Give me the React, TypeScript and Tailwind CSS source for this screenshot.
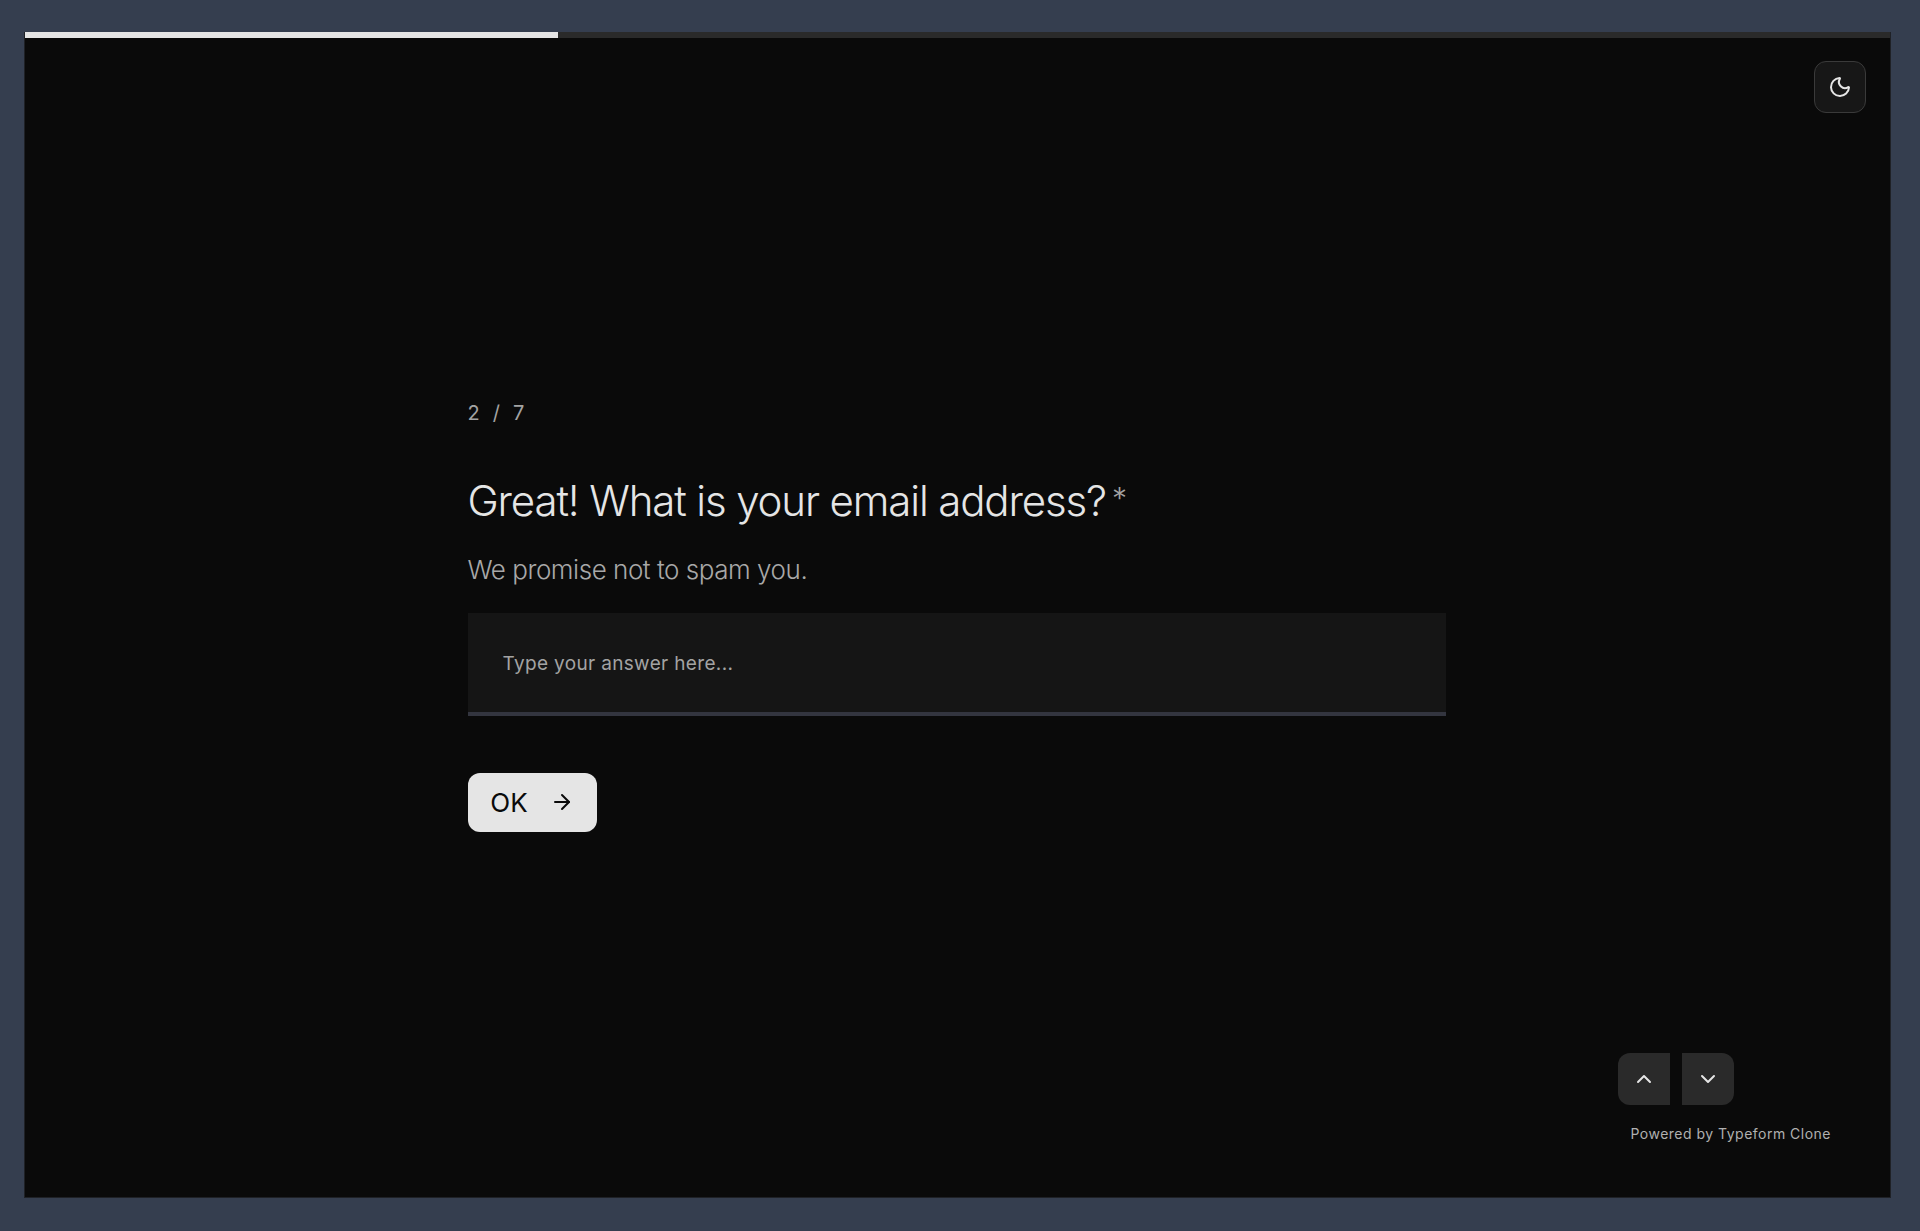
import { ArrowRight, ChevronDown, ChevronUp, Moon } from 'lucide-react';

export default function App() {
  return (
    <div className="min-h-[1231px] bg-[#353e4f] pt-8 pl-[24px] pr-[29px] pb-[33px] font-['Inter',sans-serif]">
      <div className="relative flex h-[1166px] flex-col border-x border-b border-[#1f2126] bg-[#0a0a0a]">
        {/* Progress bar */}
        <div className="h-[6px] w-full bg-[#2a2a2a]">
          <div className="h-full w-[533px] bg-[#e5e5e5]" />
        </div>

        <button className="absolute right-[24px] top-[29px] flex h-[52px] w-[52px] items-center justify-center rounded-xl border border-[#3a3a3a] bg-[#171717] text-[#e5e5e5]">
          <Moon size={24} />
        </button>

        {/* Question */}
        <div className="flex flex-1 flex-col justify-center pr-[2px] pb-[5px]">
          <div className="mx-auto w-[978px]">
            <div className="flex gap-[13px] text-[20px] leading-7 text-[#a3a3a3]">
              <span>2</span>
              <span>/</span>
              <span>7</span>
            </div>
            <h1 className="mt-[45px] text-[42px] font-light leading-[52px] tracking-[-0.027em] text-[#e5e5e5]">
              Great! What is your email address?
              <span className="ml-1.5 align-[7px] text-[30px] tracking-normal text-[#a3a3a3]">*</span>
            </h1>
            <p className="mt-[27px] text-[26px] font-light leading-8 tracking-[-0.018em] text-[#a8a8a8]">We promise not to spam you.</p>
            <div className="mt-[27px] flex h-[103px] items-center border-b-[4px] border-[#33353f] bg-[#151515] px-[35px] pt-[4px] text-[19px] tracking-[0.018em] text-[#a3a3a3]">
              Type your answer here...
            </div>
            <button className="mt-[57px] flex h-[59px] w-[129px] items-center justify-center gap-[22px] rounded-xl bg-[#e5e5e5] text-[26px] text-[#0a0a0a]">
              OK
              <ArrowRight size={24} />
            </button>
          </div>
        </div>

        {/* Nav */}
        <div className="absolute right-[156px] top-[1021px] flex gap-3">
          <button className="flex h-[52px] w-[52px] items-center justify-center rounded-l-xl bg-[#2a2a2a] text-[#e5e5e5]">
            <ChevronUp size={24} />
          </button>
          <button className="flex h-[52px] w-[52px] items-center justify-center rounded-r-xl bg-[#2a2a2a] text-[#e5e5e5]">
            <ChevronDown size={24} />
          </button>
        </div>
        <div className="absolute right-[59px] top-[1092px] text-[14px] leading-5 tracking-[0.035em] text-[#b0b0b0]">
          Powered by Typeform Clone
        </div>
      </div>
    </div>
  );
}
